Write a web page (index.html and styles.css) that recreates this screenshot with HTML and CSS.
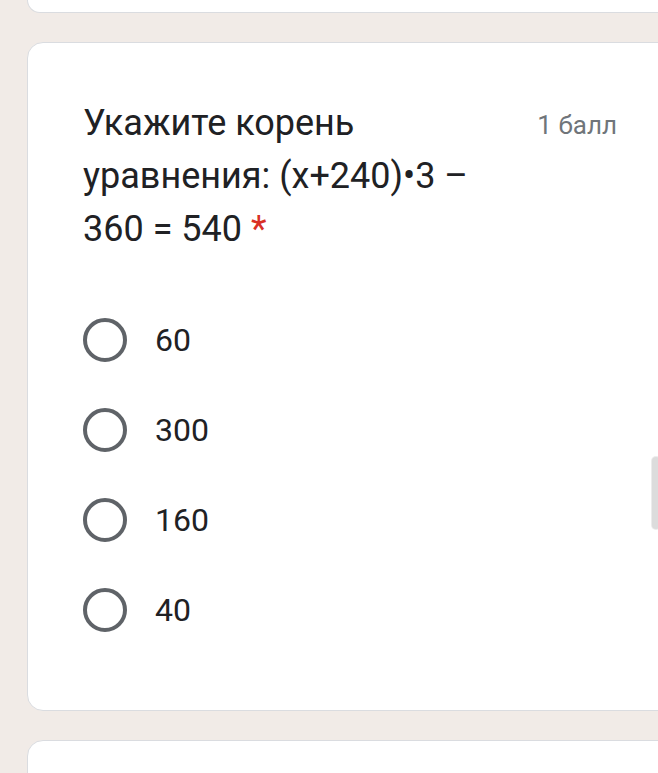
FILE: index.html
```html
<!DOCTYPE html>
<html lang="ru">
<head>
<meta charset="utf-8">
<link rel="stylesheet" href="styles.css">
</head>
<body>
<div class="page">
  <div class="card card-top"></div>
  <div class="card card-main">
    <div class="head">
      <div class="title">Укажите корень уравнения: (x+240)•3&nbsp;– 360 = 540 <span class="req">*</span></div>
      <div class="points">1 балл</div>
    </div>
    <div class="options">
      <div class="option"><span class="radio"></span><span class="label">60</span></div>
      <div class="option"><span class="radio"></span><span class="label">300</span></div>
      <div class="option"><span class="radio"></span><span class="label">160</span></div>
      <div class="option"><span class="radio"></span><span class="label">40</span></div>
    </div>
  </div>
  <div class="card card-bottom"></div>
</div>
<div class="scrollbar"></div>
</body>
</html>
```
FILE: styles.css
```css
html, body {
  margin: 0;
  padding: 0;
  height: 100%;
  overflow: hidden;
}
body {
  background: #f1ebe7;
  font-family: Roboto, "Noto Sans", sans-serif;
  color: #202124;
}
.page {
  display: flex;
  flex-direction: column;
  gap: 29px;
  padding-left: 27px;
  margin-right: -30px;
}
.card {
  background: #fff;
  border: 1px solid #dadce0;
  border-radius: 16px;
}
.card-top {
  height: 12px;
  border-top: none;
  border-radius: 0 0 16px 16px;
}
.card-main {
  height: 667px;
  box-sizing: content-box;
  padding: 0 0 0 55px;
}
.card-bottom {
  height: 60px;
}
.head {
  display: flex;
  justify-content: space-between;
  padding-top: 54px;
  padding-right: 70px;
}
.title {
  width: 420px;
  font-size: 36px;
  line-height: 53px;
  font-weight: 400;
  color: #202124;
}
.req {
  color: #d93025;
}
.points {
  font-size: 26px;
  line-height: 36px;
  color: #70757a;
  padding-top: 10px;
}
.options {
  display: flex;
  flex-direction: column;
  gap: 46px;
  margin-top: 62px;
}
.option {
  display: flex;
  align-items: center;
  gap: 28px;
  height: 44px;
}
.radio {
  width: 36px;
  height: 36px;
  border: 4px solid #5f6368;
  border-radius: 50%;
  flex: none;
}
.label {
  font-size: 32px;
  color: #202124;
}
.scrollbar {
  position: absolute;
  left: 652px;
  top: 457px;
  width: 8px;
  height: 72px;
  border-radius: 4px;
  background: #dcdcdc;
  box-shadow: 0 0 0 1px #ececec;
}
```
